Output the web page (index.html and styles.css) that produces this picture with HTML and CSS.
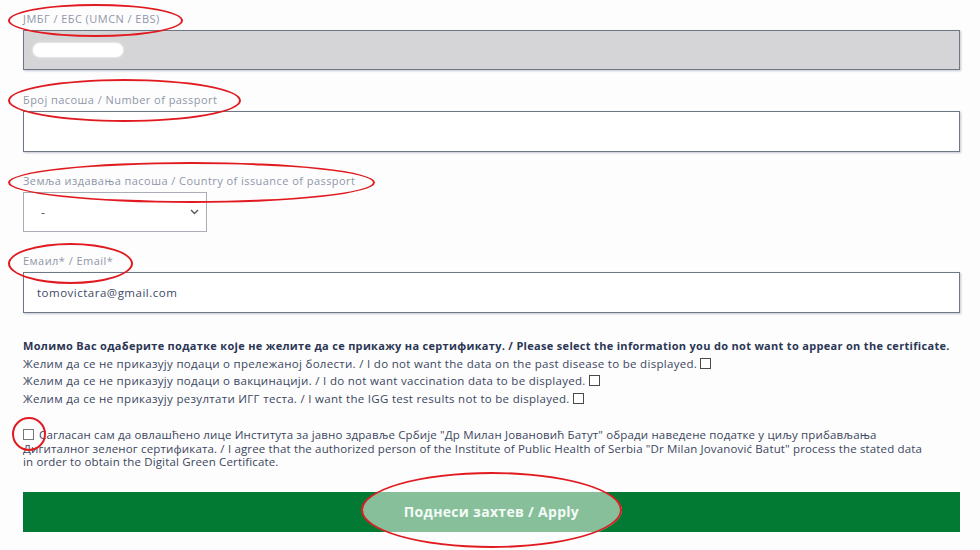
FILE: index.html
```html
<!DOCTYPE html>
<html lang="sr">
<head>
<meta charset="utf-8">
<title>Form</title>
<link rel="stylesheet" href="styles.css">
</head>
<body>
<div class="page">
  <form class="form">
    <div class="field">
      <label class="label">ЈМБГ / ЕБС (UMCN / EBS)</label>
      <div class="input input-disabled"><span class="blur-pill"></span></div>
    </div>
    <div class="field">
      <label class="label">Број пасоша / Number of passport</label>
      <div class="input"></div>
    </div>
    <div class="field">
      <label class="label">Земља издавања пасоша / Country of issuance of passport</label>
      <div class="select">
        <span class="select-value">-</span>
        <svg class="chevron" width="9" height="6" viewBox="0 0 9 6"><path d="M1 1l3.5 3.5L8 1" fill="none" stroke="#555" stroke-width="1.3"/></svg>
      </div>
    </div>
    <div class="field">
      <label class="label">Емаил* / Email*</label>
      <div class="input"><span class="input-value">tomovictara@gmail.com</span></div>
    </div>

    <div class="options">
      <p class="options-title">Молимо Вас одаберите податке које не желите да се прикажу на сертификату. / Please select the information you do not want to appear on the certificate.</p>
      <p class="option">Желим да се не приказују подаци о прележаној болести. / I do not want the data on the past disease to be displayed.<span class="box"></span></p>
      <p class="option">Желим да се не приказују подаци о вакцинацији. / I do not want vaccination data to be displayed.<span class="box"></span></p>
      <p class="option">Желим да се не приказују резултати ИГГ теста. / I want the IGG test results not to be displayed.<span class="box"></span></p>
    </div>

    <p class="consent"><span class="box box-lead"></span>Сагласан сам да овлашћено лице Института за јавно здравље Србије "Др Милан Јовановић Батут" обради наведене податке у циљу прибављања Дигиталног зеленог сертификата. / I agree that the authorized person of the Institute of Public Health of Serbia "Dr Milan Jovanović Batut" process the stated data in order to obtain the Digital Green Certificate.</p>

    <div class="submit">
      <span class="submit-glow"></span>
      <span class="submit-text">Поднеси захтев / Apply</span>
    </div>
  </form>

  <span class="mark mark-1"></span>
  <span class="mark mark-2"></span>
  <span class="mark mark-3"></span>
  <span class="mark mark-4"></span>
  <span class="mark mark-5"></span>
  <span class="mark mark-6"></span>
</div>
</body>
</html>
```

FILE: styles.css
```css
* { box-sizing: border-box; }
html, body { margin: 0; padding: 0; background: #fdfdfd; }
body { font-family: "Open Sans", "Liberation Sans", sans-serif; color: #3b4660; }

.page { position: relative; width: 980px; height: 550px; overflow: hidden; }

.form { padding: 12px 20px 0 23px; width: 960px; display: flex; flex-direction: column; }

.field { display: flex; flex-direction: column; gap: 4px; margin-bottom: 23px; }
.field:nth-child(2) { margin-bottom: 22px; }
.field:nth-child(3) { margin-bottom: 22px; }
.label { font-size: 11px; line-height: 14px; color: #8f97a9; letter-spacing: 0.45px; }

.input {
  height: 41px; width: 937px; border: 1px solid #6f7787; background: #fff;
  box-shadow: 1px 1px 2px rgba(80, 95, 130, 0.35);
  display: flex; align-items: center; padding-left: 13px;
}
.input-disabled { background: #d5d5d7; height: 40px; padding-left: 9px; }
.blur-pill { width: 90px; height: 14px; border-radius: 7px; background: #fff; box-shadow: 0 0 3px #fff; }
.input-value { font-size: 11.5px; color: #3d4a63; letter-spacing: 0.5px; }

.select {
  width: 184px; height: 40px; border: 1px solid #a9adb5; background: #fff;
  display: flex; align-items: center; justify-content: space-between; padding: 0 7px 0 17px;
}
.select-value { font-size: 12px; color: #555; }

.options { margin-top: 1px; font-size: 11.5px; line-height: 17.5px; color: #3b4660; letter-spacing: 0.3px; }
.options p { margin: 0; }
.options-title { font-weight: 700; font-size: 11px; color: #2b3655; letter-spacing: 0.31px; white-space: nowrap; }
.option { display: flex; align-items: center; }

.box {
  display: inline-block; width: 11px; height: 11px; border: 1px solid #4a4a4a; background: #fff;
  margin-left: 3px; flex: none;
}
.box-lead { margin: 0 5px 0 0; vertical-align: -1px; border-color: #777; }

.consent { margin: 21px 0 0; padding-right: 10px; font-size: 11.5px; line-height: 13.5px; color: #3b4660; letter-spacing: 0.15px; }

.submit {
  position: relative; overflow: hidden; margin-top: 23px; width: 937px; height: 40px;
  background: #037a33; display: flex; align-items: center; justify-content: center;
}
.submit-glow {
  position: absolute; left: 339px; top: -19px; width: 260px; height: 75px; border-radius: 50%;
  background: #86bf9a;
}
.submit-text { position: relative; color: #f4fbf6; font-weight: 700; font-size: 14px; letter-spacing: 0.3px; }

.mark { position: absolute; border: 2.5px solid #e11a20; border-radius: 50%; pointer-events: none; }
.mark-1 { left: 8px; top: 4px; width: 175px; height: 33px; }
.mark-2 { left: 8px; top: 79px; width: 233px; height: 43px; }
.mark-3 { left: 8px; top: 162px; width: 367px; height: 41px; }
.mark-4 { left: 8px; top: 243px; width: 125px; height: 41px; }
.mark-5 { left: 12px; top: 417px; width: 34px; height: 34px; }
.mark-6 { left: 361px; top: 472px; width: 261px; height: 76px; }
```
